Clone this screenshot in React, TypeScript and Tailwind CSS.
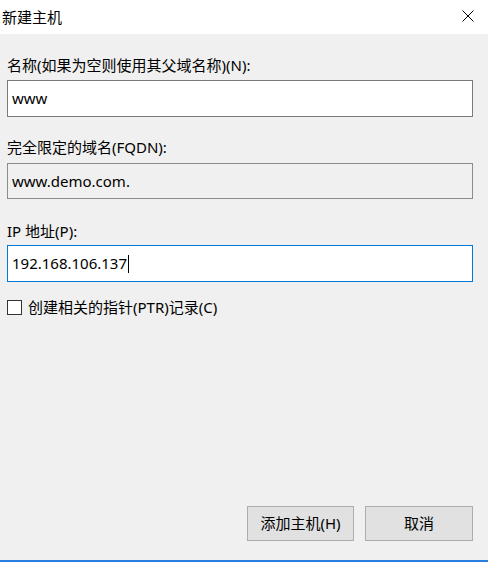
export default function App() {
  return (
    <div
      className="flex h-[562px] w-[488px] flex-col bg-[#f0f0f0] text-[15px] text-black"
      style={{ fontFamily: '"Noto Sans", "Noto Sans CJK SC", sans-serif' }}
    >
      <div className="flex h-[34px] items-center justify-between bg-white pl-[2px] pr-[14px]">
        <span className="leading-5">新建主机</span>
        <svg width="12" height="12" viewBox="0 0 12 12" className="mt-[-2px]">
          <path d="M0.5 0.5 L11.5 11.5 M11.5 0.5 L0.5 11.5" stroke="#000" strokeWidth="1" />
        </svg>
      </div>

      <div className="flex flex-1 flex-col pl-[7px] pr-[15px]">
        <label className="mt-[21px] leading-5">名称(如果为空则使用其父域名称)(N):</label>
        <div className="mt-[5px] flex h-[37px] items-center border border-[#7a7a7a] bg-white px-[4px]">
          www
        </div>

        <label className="mt-[20px] leading-5">完全限定的域名(FQDN):</label>
        <div className="mt-[6px] flex h-[36px] items-center border border-[#8c8c8c] bg-[#f0f0f0] px-[4px]">
          www.demo.com.
        </div>

        <label className="mt-[22px] leading-5">IP 地址(P):</label>
        <div className="mt-[4px] flex h-[37px] items-center border border-[#0078d7] bg-white px-[4px]">
          <span>192.168.106.137</span>
          <span className="ml-[1px] h-[18px] w-px bg-black" />
        </div>

        <label className="mt-[15px] flex h-5 items-center gap-[6px] leading-5">
          <span className="h-[15px] w-[15px] border border-[#333333] bg-white" />
          创建相关的指针(PTR)记录(C)
        </label>

        <div className="mb-[19px] mt-auto flex justify-end gap-[11px]">
          <button className="h-[35px] w-[107px] border border-[#adadad] bg-[#e1e1e1] text-[15px]">
            添加主机(H)
          </button>
          <button className="h-[35px] w-[108px] border border-[#adadad] bg-[#e1e1e1] text-[15px]">
            取消
          </button>
        </div>
      </div>
      <div className="h-[2px] bg-[#2b7de0]" />
    </div>
  );
}
